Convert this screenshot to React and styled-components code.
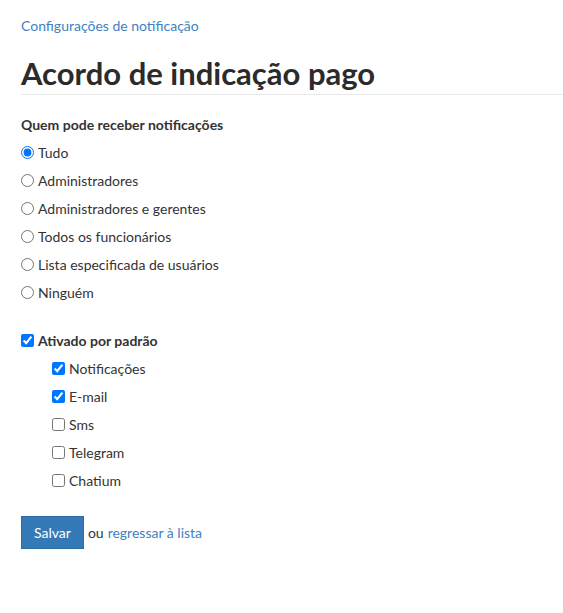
import styled, { createGlobalStyle } from "styled-components";

const GlobalStyle = createGlobalStyle`
  body {
    margin: 0;
    background: #fff;
    font-family: Lato, "Liberation Sans", sans-serif;
    color: #333;
  }
`;

const Page = styled.div`
  padding: 16px 0 40px 21px;
`;

const Breadcrumb = styled.a`
  display: block;
  font-size: 14px;
  color: #3f7fc3;
  text-decoration: none;
  line-height: 20px;
`;

const Title = styled.h1`
  margin: 19px 0 0;
  padding-bottom: 3px;
  font-size: 31px;
  font-weight: 700;
  color: #2b2b2b;
  line-height: 36px;
  border-bottom: 1px solid #e8e8e8;
`;

const Section = styled.div`
  margin-top: 21px;
`;

const Label = styled.div`
  font-size: 14px;
  font-weight: 700;
  line-height: 18px;
  margin-bottom: 4px;
`;

const Option = styled.label`
  display: flex;
  align-items: center;
  height: 28px;
  font-size: 14px;
  font-weight: ${({ $bold }) => ($bold ? 700 : 400)};
  padding-left: ${({ $indent }) => ($indent ? "31px" : "0")};

  input {
    margin: 0 4px 0 0;
    width: 13px;
    height: 13px;
  }
`;

const Group = styled.div`
  margin-top: 20px;
`;

const Actions = styled.div`
  display: flex;
  align-items: center;
  margin-top: 22px;
  font-size: 14px;
`;

const Button = styled.button`
  background: #337ab7;
  border: 1px solid #2e6da4;
  color: #fff;
  font-family: inherit;
  font-size: 14px;
  height: 33px;
  padding: 0 12px;
  margin-right: 4px;
`;

const Link = styled.a`
  color: #3f7fc3;
  text-decoration: none;
  margin-left: 4px;
`;

const who = [
  "Tudo",
  "Administradores",
  "Administradores e gerentes",
  "Todos os funcionários",
  "Lista especificada de usuários",
  "Ninguém",
];

const channels = [
  { name: "Notificações", on: true },
  { name: "E-mail", on: true },
  { name: "Sms", on: false },
  { name: "Telegram", on: false },
  { name: "Chatium", on: false },
];

export default function App() {
  return (
    <Page>
      <GlobalStyle />
      <Breadcrumb href="#">Configurações de notificação</Breadcrumb>
      <Title>Acordo de indicação pago</Title>
      <Section>
        <Label>Quem pode receber notificações</Label>
        {who.map((w, i) => (
          <Option key={w}>
            <input type="radio" name="who" defaultChecked={i === 0} />
            {w}
          </Option>
        ))}
      </Section>
      <Group>
        <Option $bold>
          <input type="checkbox" defaultChecked />
          Ativado por padrão
        </Option>
        {channels.map((c) => (
          <Option key={c.name} $indent>
            <input type="checkbox" defaultChecked={c.on} />
            {c.name}
          </Option>
        ))}
      </Group>
      <Actions>
        <Button>Salvar</Button>
        ou
        <Link href="#">regressar à lista</Link>
      </Actions>
    </Page>
  );
}
